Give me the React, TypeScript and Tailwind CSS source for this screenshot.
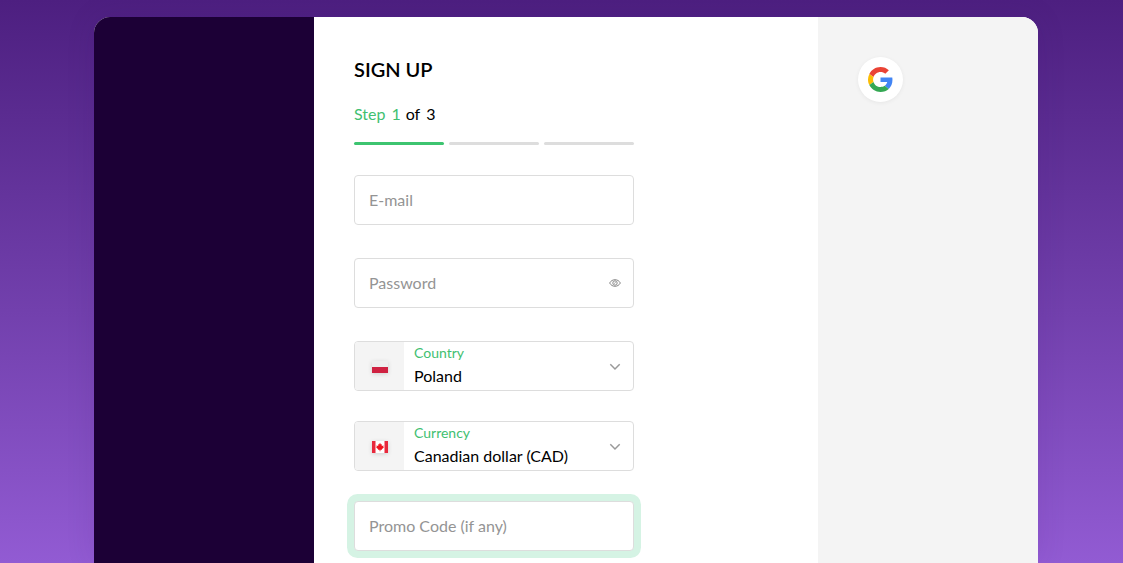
import React, { useState } from 'react';

const STEPS = [1, 2, 3];

const PolandFlag: React.FC = () => (
  <svg width="16" height="12" viewBox="0 0 16 12" className="drop-shadow-sm" aria-hidden="true">
    <rect width="16" height="6" fill="#eeeeee" />
    <rect y="6" width="16" height="6" fill="#cf2141" />
  </svg>
);

const CanadaFlag: React.FC = () => (
  <svg width="16" height="12" viewBox="0 0 16 12" className="drop-shadow-sm" aria-hidden="true">
    <rect width="16" height="12" fill="#ffffff" />
    <rect width="3.500" height="12" fill="#e8283c" />
    <rect x="12.500" width="3.500" height="12" fill="#e8283c" />
    <path
      d="M8 1.800L8.900 3.600L9.900 3.200L9.700 4.900L11.600 4.600L11.300 6L11.900 6.400L9.700 8.200L9.800 8.900L8.400 8.700V10.200H7.600V8.700L6.200 8.900L6.300 8.200L4.100 6.400L4.700 6L4.400 4.600L6.300 4.900L6.100 3.200L7.100 3.600Z"
      fill="#f0141e"
    />
  </svg>
);

const GoogleLogo: React.FC = () => (
  <svg width="25" height="25" viewBox="0 0 48 48" aria-hidden="true">
    <path fill="#EA4335" d="M24 9.500c3.540 0 6.710 1.220 9.210 3.600l6.850-6.850C35.900 2.380 30.470 0 24 0 14.620 0 6.510 5.380 2.560 13.220l7.980 6.190C12.430 13.720 17.740 9.500 24 9.500z" />
    <path fill="#4285F4" d="M46.980 24.550c0-1.570-.15-3.090-.38-4.550H24v9.020h12.940c-.58 2.960-2.260 5.480-4.780 7.180l7.730 6c4.510-4.180 7.090-10.360 7.090-17.650z" />
    <path fill="#FBBC05" d="M10.530 28.590c-.48-1.450-.76-2.990-.76-4.590s.27-3.140.76-4.590l-7.980-6.190C.92 16.460 0 20.120 0 24c0 3.880.92 7.540 2.560 10.780l7.970-6.190z" />
    <path fill="#34A853" d="M24 48c6.480 0 11.930-2.130 15.890-5.810l-7.730-6c-2.150 1.450-4.920 2.300-8.160 2.300-6.260 0-11.570-4.220-13.470-9.910l-7.980 6.190C6.510 42.620 14.620 48 24 48z" />
  </svg>
);

const EyeIcon: React.FC = () => (
  <svg width="12" height="8" viewBox="0 0 12 8" fill="none" stroke="#8a8a8a" aria-hidden="true">
    <path d="M.6 4C2 1.700 3.800.7 6 .7S10 1.700 11.400 4C10 6.300 8.200 7.300 6 7.300S2 6.300.6 4z" />
    <circle cx="6" cy="4" r="2.200" />
    <path d="M5.300 4.500l1.300-1.200" />
  </svg>
);

interface SelectFieldProps {
  id: string;
  label: string;
  options: string[];
  flag: React.ReactNode;
}

const SelectField: React.FC<SelectFieldProps> = ({ id, label, options, flag }) => (
  <div className="relative flex h-[50px] overflow-hidden rounded border border-[#dddddd]">
    <div className="flex w-[49px] shrink-0 items-center justify-center bg-[#f4f4f4] pt-[2px]">
      {flag}
    </div>
    <div className="flex min-w-0 flex-1 flex-col pl-[10px]">
      <label htmlFor={id} className="text-sm leading-[22px] text-[#3fc071]">
        {label}
      </label>
      <select id={id} className="h-6 w-full appearance-none bg-transparent text-base leading-6 text-black outline-none">
        {options.map((option) => (
          <option key={option}>{option}</option>
        ))}
      </select>
    </div>
    <svg
      width="12"
      height="8"
      viewBox="0 0 12 8"
      fill="none"
      stroke="#999999"
      strokeWidth="1.500"
      className="pointer-events-none absolute right-3 top-[21px]"
      aria-hidden="true"
    >
      <path d="M1.300 1.300L6 6l4.700-4.700" />
    </svg>
  </div>
);

const inputClass =
  'block h-[50px] w-full rounded border border-[#dddddd] bg-white px-[14px] pb-[2px] text-base text-black outline-none placeholder:text-[#949494]';

const App: React.FC = () => {
  const [currentStep] = useState(1);
  const [showPassword, setShowPassword] = useState(false);

  return (
    <div className="flex min-h-screen bg-linear-to-b from-[#4d1f80] to-[#925bd3] pl-[94px] pr-[85px] pt-[17px] font-['Lato',sans-serif]">
      <main className="flex flex-1 overflow-hidden rounded-t-2xl bg-white shadow-[0_0_30px_rgba(60,20,110,0.1)]">
        <div className="w-[220px] shrink-0 bg-[#1c0036]" />

        <section className="flex-1 px-10 pb-3 pt-[38px]">
          <form className="max-w-[280px]" onSubmit={(e) => e.preventDefault()}>
            <h1 className="text-xl font-semibold leading-7 text-black">SIGN UP</h1>

            <p className="mt-[19px] flex text-base leading-6 text-black">
              <span className="flex gap-[6px] text-[#3fc071]">
                <span>Step</span>
                <span>{currentStep}</span>
              </span>
              <span className="ml-[5px]">of</span>
              <span className="ml-[6px]">{STEPS.length}</span>
            </p>
            <div className="mt-4 grid grid-cols-3 gap-[5px]">
              {STEPS.map((step) => (
                <div
                  key={step}
                  className={step <= currentStep ? 'h-[3px] rounded-full bg-[#3dc470]' : 'h-[3px] rounded-full bg-[#dddddd]'}
                />
              ))}
            </div>

            <input type="email" aria-label="E-mail" placeholder="E-mail" className={`${inputClass} mt-[30px]`} />

            <div className="relative mt-[33px]">
              <input
                type={showPassword ? 'text' : 'password'}
                aria-label="Password"
                placeholder="Password"
                className={inputClass}
              />
              <button
                type="button"
                aria-label="Show password"
                onClick={() => setShowPassword(!showPassword)}
                className="absolute inset-y-0 right-[13px] flex items-center"
              >
                <EyeIcon />
              </button>
            </div>

            <div className="mt-[33px]">
              <SelectField id="country" label="Country" options={['Poland', 'Canada']} flag={<PolandFlag />} />
            </div>
            <div className="mt-[30px]">
              <SelectField
                id="currency"
                label="Currency"
                options={['Canadian dollar (CAD)', 'Euro (EUR)']}
                flag={<CanadaFlag />}
              />
            </div>

            <input
              type="text"
              aria-label="Promo Code (if any)"
              placeholder="Promo Code (if any)"
              className={`${inputClass} mt-[30px] ring-7 ring-[#d5f3e4]`}
            />
          </form>
        </section>

        <aside className="w-[220px] shrink-0 bg-[#f4f4f4] px-10 pt-10">
          <button
            type="button"
            aria-label="Sign up with Google"
            className="flex size-[45px] items-center justify-center rounded-full bg-white shadow-[0_1px_4px_rgba(0,0,0,0.06)]"
          >
            <GoogleLogo />
          </button>
        </aside>
      </main>
    </div>
  );
};

export default App;
